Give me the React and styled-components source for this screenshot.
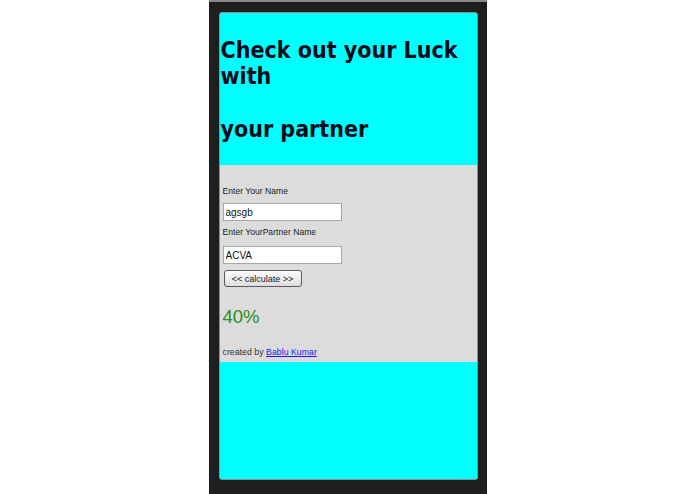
import React from "react";
import styled, { createGlobalStyle } from "styled-components";

const GlobalStyle = createGlobalStyle`
  html, body {
    margin: 0;
    padding: 0;
    background: #fff;
  }
`;

const Page = styled.div`
  display: flex;
  justify-content: center;
  height: 494px;
  overflow: hidden;
`;

const Frame = styled.div`
  box-sizing: border-box;
  display: flex;
  width: 278px;
  height: 494px;
  padding: 10px 9px 14px 10px;
  background: #1e1e1e;
  border-top: 2px solid #8a8a8a;
`;

const Screen = styled.div`
  flex: 1;
  display: flex;
  flex-direction: column;
  background: #00ffff;
  border: 1px solid #7a9696;
  border-radius: 3px;
  overflow: hidden;
`;

const Header = styled.div`
  height: 152px;
  box-sizing: border-box;
  padding: 24px 0 0 1px;
  background: #00ffff;
`;

const Title = styled.h2`
  margin: 0;
  font-family: "DejaVu Sans Condensed", "DejaVu Sans", sans-serif;
  font-weight: bold;
  font-size: 23px;
  line-height: 26.4px;
  color: #0a0a1a;
`;

const Form = styled.div`
  display: flex;
  flex-direction: column;
  align-items: flex-start;
  padding: 21px 5px 4px 3px;
  background: #dcdcdc;
`;

const Label = styled.label`
  font-family: "Liberation Sans", Arial, sans-serif;
  font-size: 8.6px;
  line-height: 11px;
  color: #222;
  margin-bottom: ${(p) => p.gap}px;
`;

const Input = styled.input`
  box-sizing: border-box;
  width: 119px;
  height: 18px;
  margin: 0 0 6px;
  padding: 0 2px;
  border: 1px solid #a8a8a8;
  background: #fff;
  font-family: "Liberation Sans", Arial, sans-serif;
  font-size: 10px;
  color: #111;
  outline: none;
`;

const Button = styled.button`
  box-sizing: border-box;
  width: 78px;
  height: 17px;
  margin: 0 0 19px 1px;
  padding: 0;
  border: 1px solid #5a5a5a;
  border-radius: 3px;
  background: linear-gradient(#fbfbfb, #dedede);
  font-family: "Liberation Sans", Arial, sans-serif;
  font-size: 9px;
  color: #222;
`;

const Result = styled.div`
  font-family: "Liberation Sans", Arial, sans-serif;
  font-size: 18.5px;
  line-height: 22px;
  color: #2c8a22;
  margin-bottom: 19px;
`;

const Credit = styled.div`
  font-family: "Liberation Sans", Arial, sans-serif;
  font-size: 8.8px;
  line-height: 11px;
  color: #333;
`;

const Link = styled.a`
  color: #1a1aee;
  text-decoration: underline;
`;

const Filler = styled.div`
  flex: 1;
  background: #00ffff;
`;

export default function App() {
  return (
    <>
      <GlobalStyle />
      <Page>
        <Frame>
          <Screen>
            <Header>
              <Title>
                Check out your Luck with
                <br />
                <br />
                your partner
              </Title>
            </Header>
            <Form>
              <Label gap={6}>Enter Your Name</Label>
              <Input defaultValue="agsgb" />
              <Label gap={8}>Enter YourPartner Name</Label>
              <Input defaultValue="ACVA" />
              <Button>&lt;&lt; calculate &gt;&gt;</Button>
              <Result>40%</Result>
              <Credit>
                created by <Link href="#">Bablu Kumar</Link>
              </Credit>
            </Form>
            <Filler />
          </Screen>
        </Frame>
      </Page>
    </>
  );
}
